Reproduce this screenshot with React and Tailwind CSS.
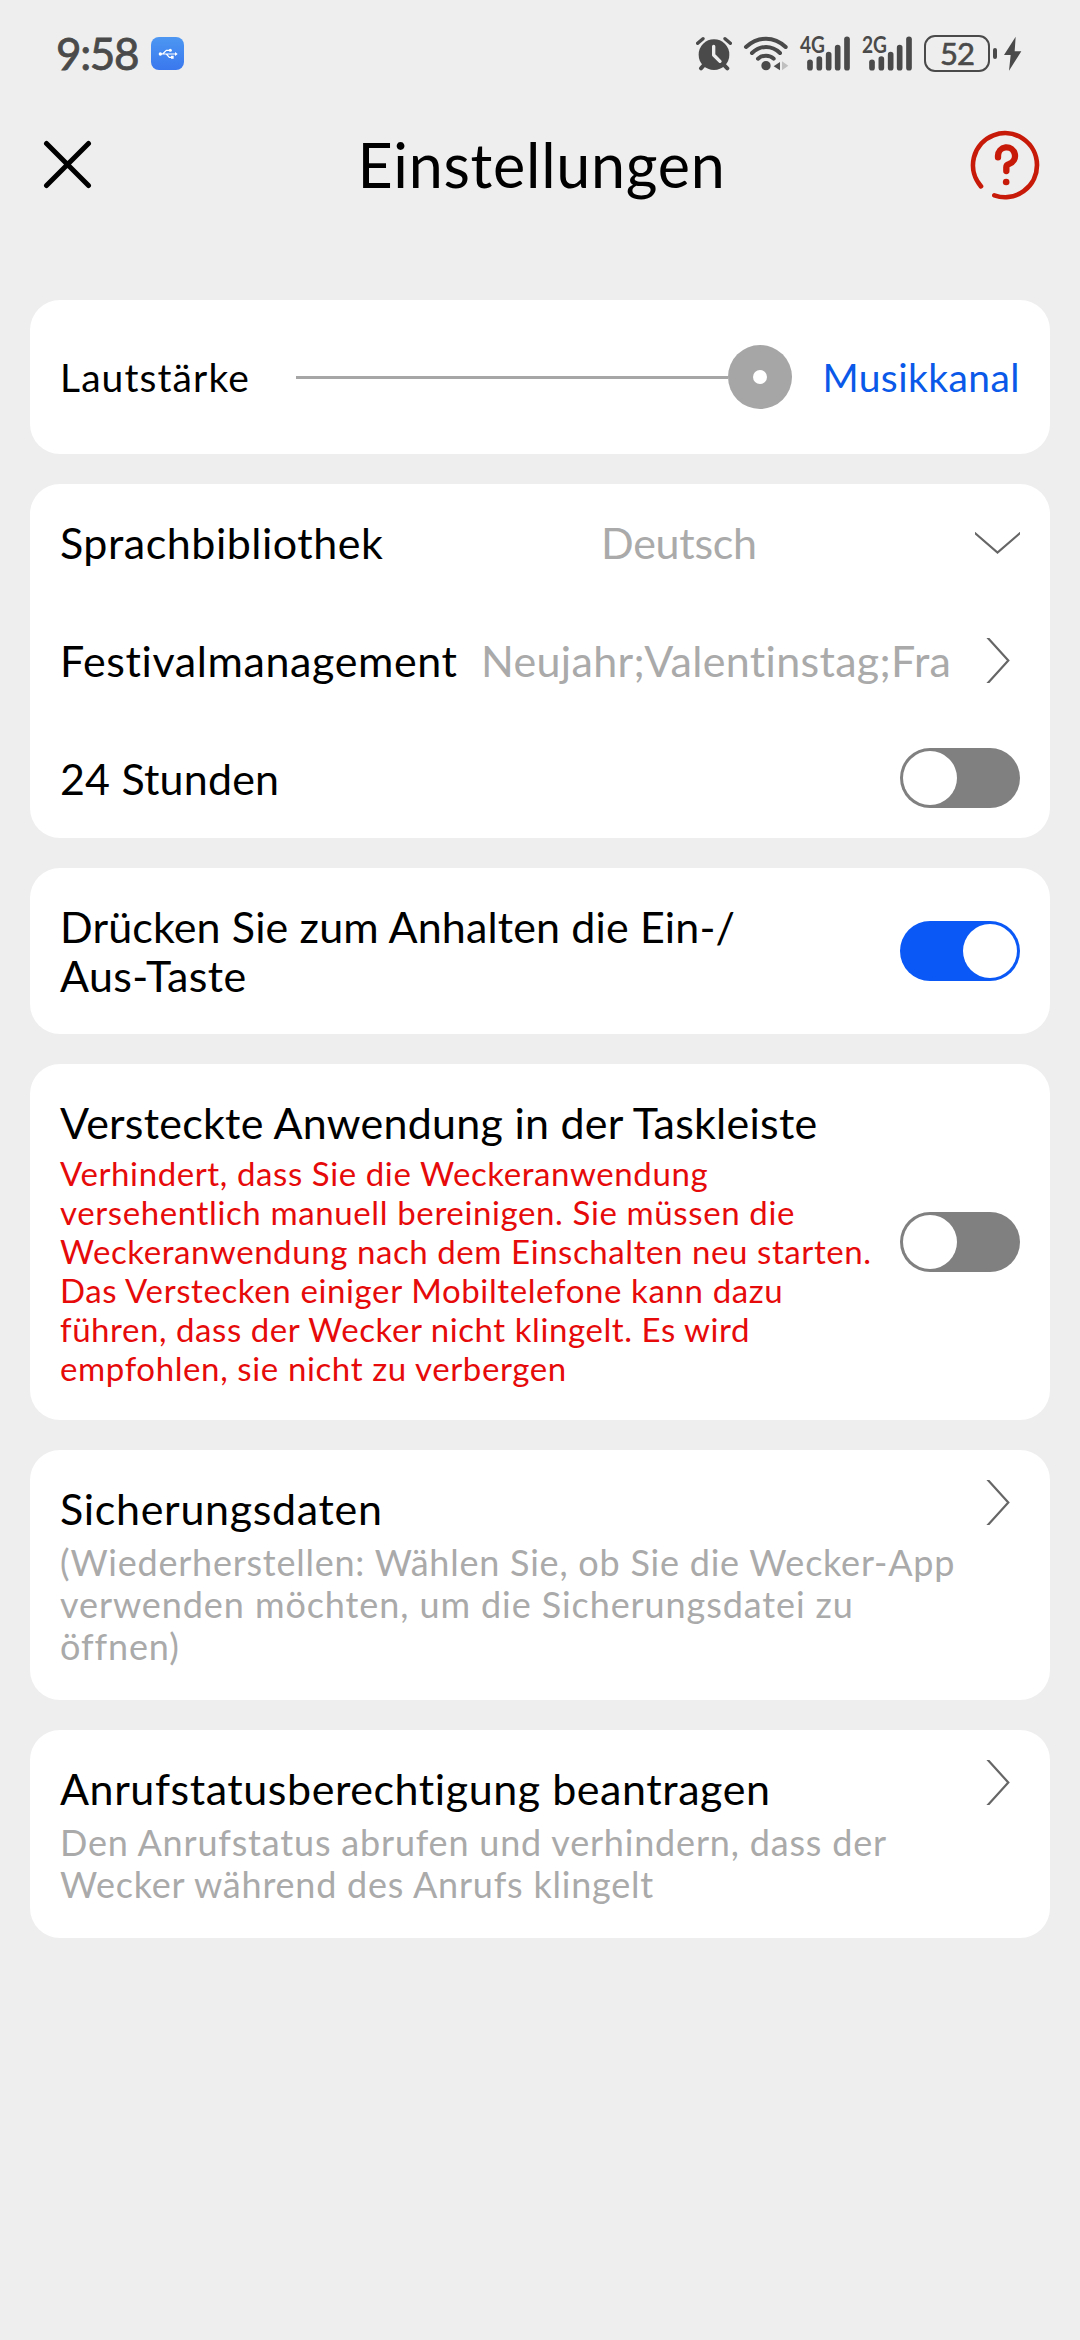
import React from "react";

function Card({ className = "", children }) {
  return <section className={`rounded-[30px] bg-white px-[30px] ${className}`}>{children}</section>;
}

function Toggle({ on = false }) {
  return (
    <div
      role="switch"
      aria-checked={on}
      className={`flex h-[60px] w-[120px] shrink-0 rounded-full p-[3px] ${
        on ? "justify-end bg-[#0a59f7]" : "justify-start bg-[#808080]"
      }`}
    >
      <div className="size-[54px] rounded-full bg-white" />
    </div>
  );
}

function ChevronRight() {
  return (
    <svg width="24" height="45" viewBox="0 0 24 45" fill="none" stroke="#666" strokeWidth="2.2" className="mr-[10px] shrink-0">
      <path d="M1-1L22.3 22.5L1 46" />
    </svg>
  );
}

function ChevronDown() {
  return (
    <svg width="45" height="22" viewBox="0 0 45 22" fill="none" stroke="#666" strokeWidth="2.2" className="shrink-0">
      <path d="M-1 .3L22.5 20.5L46 .3" />
    </svg>
  );
}

function Lines({ items, className = "" }) {
  return (
    <p className={className}>
      {items.map(([text, tracking]) => (
        <span key={text} className={`block whitespace-nowrap ${tracking}`}>
          {text}
        </span>
      ))}
    </p>
  );
}

function Signal({ label }) {
  const bars = [
    [390, 127],
    [418, 117],
    [446, 104],
    [473, 83],
    [501, 58],
  ];
  return (
    <svg width="52" height="35" viewBox="357 48 156 105" className="overflow-visible">
      <g stroke="#4a4a4a" strokeWidth="17" strokeLinecap="round">
        {bars.map(([x, y]) => (
          <line key={x} x1={x} x2={x} y1={y} y2="143" />
        ))}
      </g>
      <text
        x="360"
        y="99"
        textLength="75"
        lengthAdjust="spacingAndGlyphs"
        fill="#4a4a4a"
        className="font-['Lato',sans-serif] text-[66px] font-bold"
      >
        {label}
      </text>
    </svg>
  );
}

function StatusBar() {
  return (
    <div className="flex h-[100px] items-start pr-[58px] pl-[56px] text-[#4a4a4a]">
      <span className="mt-[27px] w-[95px] text-[44px] leading-[53px] tracking-[-1.35px] whitespace-nowrap [-webkit-text-stroke:0.8px_#4a4a4a]">
        9:58
      </span>
      <div className="mt-[37px] flex size-[33px] items-center justify-center rounded-lg bg-linear-to-b from-[#4d97f2] to-[#3a77ee]">
        <svg width="20" height="12" viewBox="472 142 60 36" fill="none" stroke="#fff" strokeWidth="3.5">
          <path d="M478 160H526M486 160L497 149H508M497 160L506 170H514" />
          <circle cx="479" cy="160" r="5" fill="#fff" stroke="none" />
          <circle cx="509" cy="149" r="4.5" fill="#fff" stroke="none" />
          <path d="M511 165h8v9h-8zM523 154l8 6l-8 6z" fill="#fff" stroke="none" />
        </svg>
      </div>
      <div className="mt-[36px] ml-auto flex items-start">
        <svg width="36" height="35" viewBox="48 48 108 105" fill="none" strokeLinecap="round">
          <circle cx="102" cy="104" r="46" fill="#4a4a4a" />
          <path d="M53 70L69 56M151 70L135 56" stroke="#4a4a4a" strokeWidth="10" />
          <path d="M73 134L63 145M131 134L142 145" stroke="#4a4a4a" strokeWidth="12" />
          <path d="M101 79V105L120 124" stroke="#eee" strokeWidth="10" strokeLinejoin="round" />
        </svg>
        <svg width="46" height="35" viewBox="189 48 138 105" fill="none" stroke="#4a4a4a" strokeWidth="12" strokeLinecap="round" className="ml-[11px]">
          <path d="M198 81Q225 56 258 56T317 81M216 99Q235 81 258 81T300 99M234 116Q244 107 258 107T281 116" />
          <circle cx="258" cy="137" r="14" fill="#4a4a4a" stroke="none" />
          <path d="M300 126V151L281 139Z" fill="#4a4a4a" stroke="none" />
          <path d="M306 124V151L325 137Z" fill="#c0c0c0" stroke="none" />
        </svg>
        <div className="ml-[10px] flex gap-[10px]">
          <Signal label="4G" />
          <Signal label="2G" />
        </div>
        <div className="-mt-[1px] ml-[11px] flex items-center">
          <div className="flex h-[37px] w-[66px] items-center justify-center rounded-[11px] border-[2.5px] border-[#4a4a4a]">
            <span className="text-[31px] leading-none tracking-[-1px] [-webkit-text-stroke:0.6px_#4a4a4a]">52</span>
          </div>
          <div className="ml-[3px] h-[11px] w-[4px] rounded-full bg-[#4a4a4a]" />
        </div>
        <svg width="19" height="35" viewBox="969 48 57 105" className="ml-[6px]">
          <path d="M1007 50L972 105H992L987 152L1024 94H1004Z" fill="#4a4a4a" />
        </svg>
      </div>
    </div>
  );
}

function Header() {
  return (
    <header className="grid h-[200px] grid-cols-[70px_1fr_70px] items-start pr-[40px] pl-[43px]">
      <svg width="49" height="49" viewBox="0 0 49 49" stroke="#000" strokeWidth="5" strokeLinecap="round" className="mt-[40px]">
        <path d="M3.5 3.5L45.5 45.5M45.5 3.5L3.5 45.5" />
      </svg>
      <h1 className="mt-[28px] text-center text-[61px] leading-[73px] tracking-[0.75px] text-black">Einstellungen</h1>
      <svg width="70" height="70" viewBox="90 60 210 210" fill="none" stroke="#c81a08" strokeLinecap="round" className="mt-[30px]">
        <path d="M123 229A96 96 0 1 1 163 256" strokeWidth="14" />
        <path d="M174 142V138A25.500 25.500 0 1 1 207 162Q199 164 199 172V183" strokeWidth="19" />
        <circle cx="198.500" cy="216" r="10" fill="#c81a08" stroke="none" />
      </svg>
    </header>
  );
}

const hiddenAppWarning = [
  ["Verhindert, dass Sie die Weckeranwendung", "tracking-[0.6px]"],
  ["versehentlich manuell bereinigen. Sie müssen die", "tracking-[0.62px]"],
  ["Weckeranwendung nach dem Einschalten neu starten.", "tracking-[0.58px]"],
  ["Das Verstecken einiger Mobiltelefone kann dazu", "tracking-[0.62px]"],
  ["führen, dass der Wecker nicht klingelt. Es wird", "tracking-[0.57px]"],
  ["empfohlen, sie nicht zu verbergen", "tracking-[0.62px]"],
];

const backupHint = [
  ["(Wiederherstellen: Wählen Sie, ob Sie die Wecker-App", "tracking-[0.77px]"],
  ["verwenden möchten, um die Sicherungsdatei zu", "tracking-[0.91px]"],
  ["öffnen)", "tracking-[0.9px]"],
];

const callStateHint = [
  ["Den Anrufstatus abrufen und verhindern, dass der", "tracking-[0.81px]"],
  ["Wecker während des Anrufs klingelt", "tracking-[0.78px]"],
];

export default function App() {
  return (
    <div className="h-[2340px] w-[1080px] overflow-hidden bg-[#eee] font-['Lato',sans-serif] text-[43px] leading-[49px] text-black">
      <StatusBar />
      <Header />
      <main className="flex flex-col gap-[30px] px-[30px]">
        <Card className="flex h-[154px] items-center text-[39px] leading-[47px]">
          <span className="w-[236px] tracking-[1.1px]">Lautstärke</span>
          <div className="flex w-[496px] items-center">
            <div className="h-[3px] flex-1 bg-[#a6a6a6]" />
            <div className="flex size-[64px] items-center justify-center rounded-full bg-[#a6a6a6]">
              <div className="size-[14px] rounded-full bg-white" />
            </div>
          </div>
          <span className="ml-auto tracking-[0.44px] text-[#0a59e8]">Musikkanal</span>
        </Card>

        <Card className="h-[354px]">
          <div className="flex h-[117px] items-center">
            <span className="w-[541px] tracking-[0.52px]">Sprachbibliothek</span>
            <span className="mr-auto tracking-[-0.27px] text-[#aaa]">Deutsch</span>
            <ChevronDown />
          </div>
          <div className="flex h-[118px] items-center">
            <span className="w-[421px] tracking-[0.6px]">Festivalmanagement</span>
            <span className="mr-auto tracking-[0.32px] whitespace-nowrap text-[#aaa]">Neujahr;Valentinstag;Fra</span>
            <ChevronRight />
          </div>
          <div className="flex h-[118px] items-center justify-between">
            <span className="tracking-[0.18px]">24 Stunden</span>
            <Toggle />
          </div>
        </Card>

        <Card className="flex h-[166px] items-center justify-between">
          <Lines
            items={[
              ["Drücken Sie zum Anhalten die Ein-/", "tracking-[0.14px]"],
              ["Aus-Taste", "tracking-[0.4px]"],
            ]}
          />
          <Toggle on />
        </Card>

        <Card className="flex h-[356px] items-center justify-between">
          <div className="self-start pt-[34px]">
            <h2 className="tracking-[0.25px]">Versteckte Anwendung in der Taskleiste</h2>
            <Lines className="mt-[7px] text-[33px] leading-[39px] text-[#e60a0a]" items={hiddenAppWarning} />
          </div>
          <Toggle />
        </Card>

        <Card className="flex h-[250px] items-start justify-between pt-[30px]">
          <div className="pt-[4px]">
            <h2 className="tracking-[0.68px]">Sicherungsdaten</h2>
            <Lines className="mt-[8px] text-[36px] leading-[42px] text-[#aaa]" items={backupHint} />
          </div>
          <ChevronRight />
        </Card>

        <Card className="flex h-[208px] items-start justify-between pt-[30px]">
          <div className="pt-[4px]">
            <h2 className="tracking-[0.56px]">Anrufstatusberechtigung beantragen</h2>
            <Lines className="mt-[8px] text-[36px] leading-[42px] text-[#aaa]" items={callStateHint} />
          </div>
          <ChevronRight />
        </Card>
      </main>
    </div>
  );
}
